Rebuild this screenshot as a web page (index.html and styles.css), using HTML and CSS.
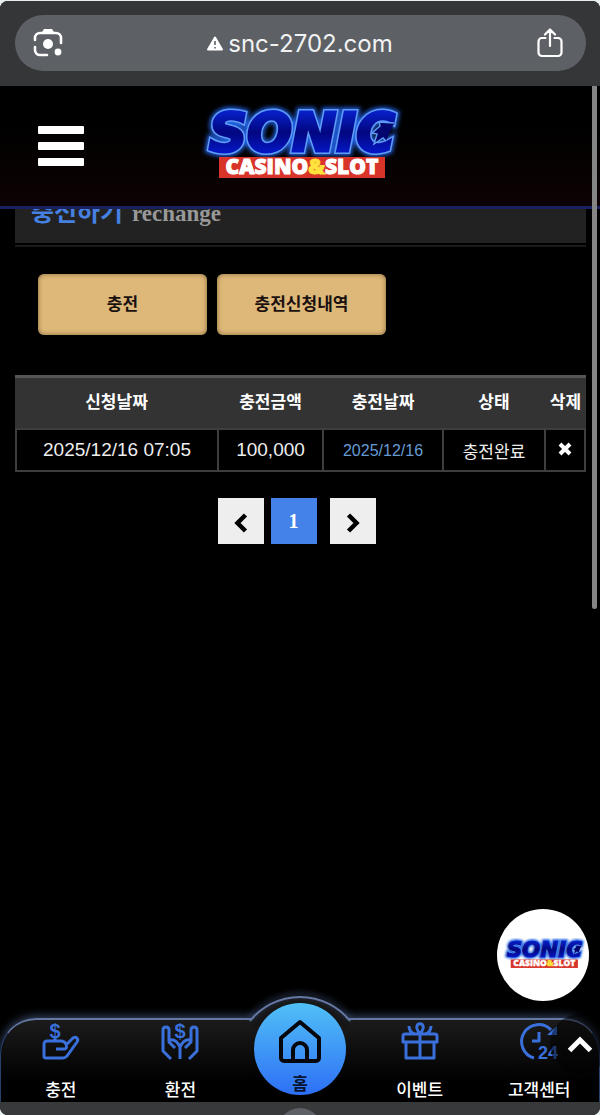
FILE: index.html
```html
<!DOCTYPE html>
<html lang="ko">
<head>
    <meta charset="UTF-8">
    <meta name="viewport" content="width=device-width, initial-scale=1.0">
    <title>충전하기</title>
    <link rel="stylesheet" href="styles.css">
</head>
<body>
<div class="screen">
    <div class="browser-bar">
        <div class="address">
            <button class="icon-btn" aria-label="Lens">
                <svg width="30" height="30" viewBox="0 0 30 30" fill="none" stroke="#fff" stroke-width="2.6" stroke-linecap="round">
                    <path d="M2 12V10a5 5 0 0 1 5-5h16a5 5 0 0 1 5 5v5M2 19v3a5 5 0 0 0 5 5h7"/>
                    <path d="M9 4l2-3h8l2 3z" fill="#fff" stroke="none"/>
                    <circle cx="15" cy="16" r="5" fill="#fff" stroke="none"/>
                    <circle cx="25" cy="24" r="3.4" fill="#fff" stroke="none"/>
                </svg>
            </button>
            <span class="url">
                <svg width="16" height="15" viewBox="0 0 16 15">
                    <path d="M8 1.5L15 13.500H1z" fill="#fff" stroke="#fff" stroke-width="2" stroke-linejoin="round"/>
                    <path d="M8 5v4M8 11v1.600" stroke="#5d6064" stroke-width="1.6"/>
                </svg>
                <span>snc-2702.com</span>
            </span>
            <button class="icon-btn" aria-label="Share">
                <svg width="26" height="30" viewBox="0 0 26 30" fill="none" stroke="#fff" stroke-width="2.2" stroke-linecap="round" stroke-linejoin="round">
                    <path d="M8.500 10H5a3.500 3.500 0 0 0-3.500 3.500v11A3.500 3.500 0 0 0 5 28h16a3.500 3.500 0 0 0 3.500-3.500v-11A3.500 3.500 0 0 0 21 10h-3.500M13 18V2M8 6.500l5-5 5 5"/>
                </svg>
            </button>
        </div>
    </div>

    <header class="site-header">
        <button class="menu-btn" aria-label="메뉴"><span></span><span></span><span></span></button>
        <a href="#" class="logo" aria-label="SONIC CASINO&amp;SLOT">
            <svg viewBox="0 0 210 84" width="210" height="84">
                <defs>
                    <linearGradient id="logo-fill" x1="0" y1="0" x2="0" y2="1">
                        <stop offset="0" stop-color="#0a2be8"/>
                        <stop offset=".5" stop-color="#020680"/>
                        <stop offset="1" stop-color="#0620e8"/>
                    </linearGradient>
                    <filter id="glow" x="-10%" y="-30%" width="120%" height="160%">
                        <feGaussianBlur stdDeviation="2"/>
                    </filter>
                    <g id="logo-mark">
                        <text class="logo-glow" x="107" y="47" filter="url(#glow)">SONIC</text>
                        <text class="logo-edge" x="107" y="47">SONIC</text>
                        <text class="logo-name" x="107" y="47">SONIC</text>
                        <path d="M199 19l-15-1 1 4-8 7 5 1-3 10 9-6 3 3" fill="#02066e" stroke="#5f9cf5" stroke-width="1.500"/>
                        <rect x="24" y="53" width="166" height="21" fill="#d8342a"/>
                        <text class="logo-sub" x="107" y="70">CASINO<tspan fill="#ffe23c">&amp;</tspan>SLOT</text>
                    </g>
                </defs>
                <use href="#logo-mark"/>
            </svg>
        </a>
    </header>

    <main>
        <div class="page-title">
            <h1>충전하기 <small>rechange</small></h1>
        </div>

        <div class="tabs">
            <button>충전</button>
            <button>충전신청내역</button>
        </div>

        <table class="history">
            <thead>
                <tr>
                    <th class="col-request">신청날짜</th>
                    <th class="col-amount">충전금액</th>
                    <th class="col-date">충전날짜</th>
                    <th class="col-status">상태</th>
                    <th class="col-delete">삭제</th>
                </tr>
            </thead>
            <tbody>
                <tr>
                    <td>2025/12/16 07:05</td>
                    <td>100,000</td>
                    <td class="done-date">2025/12/16</td>
                    <td class="status">충전완료</td>
                    <td>
                        <button class="delete-btn" aria-label="삭제">
                            <svg width="14" height="14" viewBox="0 0 14 14"><path d="M2 2l10 10M12 2L2 12" stroke="#fff" stroke-width="4"/></svg>
                        </button>
                    </td>
                </tr>
            </tbody>
        </table>

        <nav class="pagination" aria-label="페이지">
            <a href="#" aria-label="이전"><svg width="14" height="20" viewBox="0 0 14 20"><path d="M11.500 2l-8 8 8 8" fill="none" stroke="#000" stroke-width="4.500"/></svg></a>
            <a href="#" class="current">1</a>
            <a href="#" aria-label="다음"><svg width="14" height="20" viewBox="0 0 14 20"><path d="M2.500 2l8 8-8 8" fill="none" stroke="#000" stroke-width="4.500"/></svg></a>
        </nav>

        <a href="#" class="float-logo" aria-label="SONIC">
            <svg viewBox="0 0 210 84" width="85" height="34"><use href="#logo-mark"/></svg>
        </a>
        <div class="scroll-thumb"></div>
    </main>

    <nav class="bottom-nav">
        <svg class="hump" width="106" height="36" viewBox="0 0 106 36">
            <path d="M4 28A64 64 0 0 1 102 28V36H4z" fill="#161617"/>
            <path class="hump-line" d="M3 29A64 64 0 0 1 103 29" fill="none" stroke="#6478a4" stroke-width="2"/>
        </svg>
        <a href="#">
            <svg width="38" height="38" viewBox="0 0 38 38">
                <path d="M13 16v4M14 27h8c3 0 3-3 2-5-1-2-3-3-5-3H5a3 3 0 0 0-3 3v12a2 2 0 0 0 2 2h17c2 0 3-1 4-2l10-14c2-3-1-6-4-4l-7 7"/>
                <text x="13" y="16">$</text>
            </svg>
            <span>충전</span>
        </a>
        <a href="#">
            <svg width="38" height="38" viewBox="0 0 38 38">
                <path d="M10 37l-8-8V8c0-4 6-4 6 0v12l6 6M28 37l8-8V8c0-4-6-4-6 0v12l-6 6M9 18c4-1 7 1 10 7 3-6 6-8 10-7M19 25v12"/>
                <text x="19" y="16">$</text>
            </svg>
            <span>환전</span>
        </a>
        <a href="#" class="home">
            <svg width="44" height="44" viewBox="0 0 44 44">
                <path d="M22 3L3 19v20a3 3 0 0 0 3 3h32a3 3 0 0 0 3-3V19zM15 42V31a7 7 0 0 1 14 0v11"/>
            </svg>
            <span>홈</span>
        </a>
        <a href="#">
            <svg width="38" height="38" viewBox="0 0 38 38">
                <path d="M4 12h30a2 2 0 0 1 2 2v6H2v-6a2 2 0 0 1 2-2zM5 20v16h28V20M19 12v24M19 12c-3-4-4-6-3-8 1-3 5-3 6 0 1 2 0 4-3 8zM14 12c-4-1-6-4-6-8M24 12c4-1 6-4 6-8"/>
            </svg>
            <span>이벤트</span>
        </a>
        <a href="#">
            <svg width="38" height="38" viewBox="0 0 38 38">
                <path d="M14 36A17 17 0 1 1 31 8M19 10v9h-7"/>
                <path d="M27 13h10V4z" fill="#3a70dc" stroke="none"/>
                <text class="digits" x="28" y="37">24</text>
            </svg>
            <span>고객센터</span>
        </a>
        <button class="to-top" aria-label="맨 위로">
            <svg width="26" height="18" viewBox="0 0 26 18"><path d="M2.500 15.500L13 5l10.500 10.500" fill="none" stroke="#fff" stroke-width="5"/></svg>
        </button>
    </nav>
    <div class="browser-foot"></div>
</div>
</body>
</html>
```

FILE: styles.css
```css
* {
    box-sizing: border-box;
}
body {
    margin: 0;
    background: #e9eeee;
    color: #fff;
    font-family: "Liberation Sans", "Noto Sans CJK KR", sans-serif;
    font-size: 17px;
}
a {
    color: inherit;
    text-decoration: none;
}
button {
    border: none;
    padding: 0;
    background: none;
    font: inherit;
    cursor: pointer;
}
svg {
    display: block;
}
.screen {
    position: relative;
    display: flex;
    flex-direction: column;
    min-height: calc(100vh - 1px);
    margin-top: 1px;
    background: #000;
    border-radius: 8px;
    overflow: hidden;
}

/* browser chrome */
.browser-bar {
    padding: 14px 14px 15px 15px;
    background: #343638;
}
.address {
    display: flex;
    align-items: center;
    justify-content: space-between;
    height: 56px;
    padding: 0 23px 0 18px;
    background: #5d6064;
    border-radius: 28px;
}
.url {
    display: flex;
    align-items: center;
    gap: 5px;
    color: #f1f2f3;
    font-family: Inter, sans-serif;
    font-size: 24px;
}
.browser-foot {
    position: relative;
    height: 13px;
    background: #38393b;
    overflow: hidden;
}
.browser-foot::after {
    content: "";
    position: absolute;
    top: 6px;
    left: 50%;
    width: 44px;
    height: 44px;
    margin-left: -22px;
    border-radius: 50%;
    background: #5d6064;
}

/* site header */
.site-header {
    position: relative;
    z-index: 2;
    display: grid;
    grid-template-columns: 1fr auto 1fr;
    align-items: center;
    height: 123px;
    padding: 0 38px;
    background: linear-gradient(#000 30%, #0d0203);
    border-bottom: 3px solid #1a2160;
}
.menu-btn {
    display: grid;
    gap: 8px;
    width: 46px;
}
.menu-btn span {
    height: 8px;
    background: #fff;
    border-radius: 1px;
}
.logo svg {
    overflow: visible;
}
.logo-glow,
.logo-edge,
.logo-name {
    font-family: "DejaVu Sans", sans-serif;
    font-size: 53px;
    font-weight: bold;
    font-style: italic;
    text-anchor: middle;
}
.logo-glow {
    fill: #2260e0;
    stroke: #2260e0;
    stroke-width: 9px;
}
.logo-edge {
    fill: #5f9cf5;
    stroke: #5f9cf5;
    stroke-width: 6px;
}
.logo-name {
    fill: url(#logo-fill);
    stroke: url(#logo-fill);
    stroke-width: 3px;
}
.logo-sub {
    fill: #fff;
    stroke: #fff;
    stroke-width: 1px;
    font-family: "Open Sans", sans-serif;
    font-size: 21px;
    font-weight: 800;
    text-anchor: middle;
}
.logo-sub tspan {
    stroke: #ffe23c;
}

/* content */
main {
    position: relative;
    flex: 1;
    margin-top: -36px;
    padding: 0 14px 0 15px;
}
.page-title {
    padding-bottom: 2px;
    border-bottom: 2px solid #1a1a1a;
}
.page-title h1 {
    margin: 0;
    padding: 21px 16px 11px;
    background: #222;
    color: #4680e0;
    font-size: 25px;
    line-height: 36px;
}
.page-title small {
    margin-left: 2px;
    color: #999;
    font-family: "Liberation Serif", serif;
    font-size: 23px;
}
.tabs {
    display: flex;
    gap: 10px;
    padding: 27px 23px 40px;
}
.tabs button {
    width: 169px;
    height: 61px;
    padding-bottom: 4px;
    background: #deb878;
    border-radius: 6px;
    box-shadow: inset 0 0 5px #86683c;
    color: #1a1110;
    font-weight: bold;
}
.history {
    width: 100%;
    table-layout: fixed;
    border-spacing: 0;
    text-align: center;
}
.history th {
    height: 53px;
    padding: 0 0 6px;
    background: #333;
    border-top: 3px solid #555;
    font-weight: bold;
}
.history td {
    height: 44px;
    padding: 0;
    border: 1px solid #3e3e3e;
    border-width: 2px 1px;
    color: #eee;
    font-size: 19px;
}
.history td:first-child {
    border-left-width: 2px;
}
.history td:last-child {
    border-right-width: 2px;
}
.col-amount { width: 105px; }
.col-date { width: 120px; }
.col-status { width: 102px; }
.col-delete { width: 41px; }
.history .done-date {
    padding-top: 2px;
    color: #669bd4;
    font-size: 16px;
}
.history .status {
    font-size: 17px;
}
.delete-btn svg {
    margin: 0 auto;
}
.pagination {
    display: flex;
    justify-content: center;
    gap: 7px;
    margin-top: 26px;
    padding-right: 8px;
}
.pagination a {
    display: flex;
    align-items: center;
    justify-content: center;
    width: 46px;
    height: 46px;
    padding-top: 4px;
    background: #eee;
}
.pagination .current {
    margin-right: 6px;
    padding: 0;
    background: #4482ea;
    font-family: "Liberation Serif", serif;
    font-size: 20px;
    font-weight: bold;
}
.float-logo {
    position: absolute;
    right: 11px;
    bottom: 17px;
    display: flex;
    align-items: center;
    justify-content: center;
    width: 92px;
    height: 92px;
    background: #fff;
    border-radius: 50%;
}
.scroll-thumb {
    position: absolute;
    top: 0;
    right: 3px;
    width: 5px;
    height: 436px;
    background: #858585;
    border-radius: 3px;
}
.site-header::after {
    content: "";
    position: absolute;
    top: 0;
    right: 3px;
    width: 5px;
    height: 123px;
    background: #858585;
}

/* bottom menu */
.bottom-nav {
    position: relative;
    display: grid;
    grid-template-columns: repeat(5, 1fr);
    height: 84px;
    background: linear-gradient(#1b1b1c, #000 75%);
    border: 1px solid #28406e;
    border-top: 2px solid #6478a4;
    border-bottom: none;
    border-radius: 36px 36px 0 0;
    box-shadow: 0 -2px 8px #34425f;
}
.bottom-nav a {
    position: relative;
    display: flex;
    flex-direction: column;
    align-items: center;
    justify-content: space-between;
    padding: 2px 0 1px;
    font-weight: 500;
}
.bottom-nav a svg {
    fill: none;
    stroke: #3a70dc;
    stroke-width: 3;
    stroke-linejoin: round;
    overflow: visible;
}
.bottom-nav text {
    fill: #3a70dc;
    stroke: none;
    font-size: 20px;
    font-weight: bold;
    text-anchor: middle;
}
.bottom-nav .digits {
    font-size: 18px;
}
.bottom-nav .home {
    justify-self: center;
    width: 92px;
    height: 92px;
    margin-top: -17px;
    padding: 16px 0 0;
    background: linear-gradient(#50c0f6, #2e6ff6);
    border-radius: 50%;
    color: #081430;
    font-weight: bold;
}
.bottom-nav .home svg {
    stroke: #05070c;
    stroke-width: 4;
}
.hump {
    position: absolute;
    top: -28px;
    left: 50%;
    margin-left: -53px;
    overflow: visible;
}
.hump-line {
    filter: drop-shadow(0 -2px 3px #4a5f90);
}
.to-top {
    position: absolute;
    top: -6px;
    right: -11px;
    display: flex;
    align-items: center;
    justify-content: center;
    width: 60px;
    height: 60px;
    background: rgba(0, 0, 0, 0.5);
    border-radius: 50%;
}
```
